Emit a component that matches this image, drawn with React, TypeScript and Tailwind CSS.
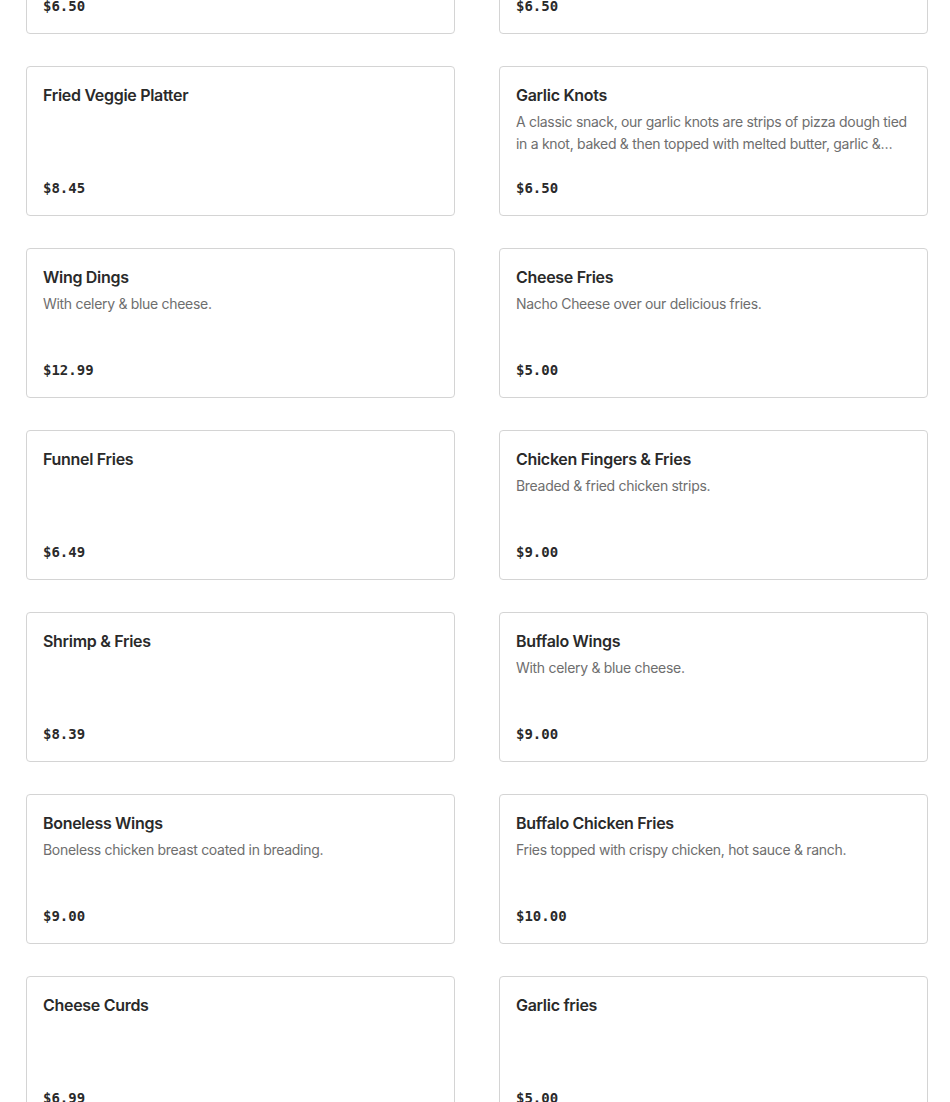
type Item = {
  name: string;
  description?: string;
  price: string;
};

const items: Item[] = [
  { name: "Mozzarella Sticks", price: "$6.50" },
  { name: "Onion Rings", price: "$6.50" },
  { name: "Fried Veggie Platter", price: "$8.45" },
  {
    name: "Garlic Knots",
    description:
      "A classic snack, our garlic knots are strips of pizza dough tied in a knot, baked & then topped with melted butter, garlic & parmesan cheese.",
    price: "$6.50",
  },
  { name: "Wing Dings", description: "With celery & blue cheese.", price: "$12.99" },
  { name: "Cheese Fries", description: "Nacho Cheese over our delicious fries.", price: "$5.00" },
  { name: "Funnel Fries", price: "$6.49" },
  { name: "Chicken Fingers & Fries", description: "Breaded & fried chicken strips.", price: "$9.00" },
  { name: "Shrimp & Fries", price: "$8.39" },
  { name: "Buffalo Wings", description: "With celery & blue cheese.", price: "$9.00" },
  { name: "Boneless Wings", description: "Boneless chicken breast coated in breading.", price: "$9.00" },
  {
    name: "Buffalo Chicken Fries",
    description: "Fries topped with crispy chicken, hot sauce & ranch.",
    price: "$10.00",
  },
  { name: "Cheese Curds", price: "$6.99" },
  { name: "Garlic fries", price: "$5.00" },
];

function MenuCard({ item }: { item: Item }) {
  return (
    <div className="flex h-[150px] flex-col rounded-[4px] border border-[#d4d4d4] bg-white px-4 pt-4 pb-[15px]">
      <h3 className="text-[16px] leading-6 font-semibold tracking-[-0.3px] text-[#2a2a2a]">
        {item.name}
      </h3>
      {item.description && (
        <p className="mt-1 line-clamp-2 text-[14px] leading-[22px] tracking-[-0.3px] text-[#6e6e6e]">
          {item.description}
        </p>
      )}
      <div className="mt-auto font-['DejaVu_Sans_Mono',monospace] text-[14px] leading-6 font-bold text-[#2a2a2a]">
        {item.price}
      </div>
    </div>
  );
}

export default function App() {
  return (
    <div className="h-[1102px] overflow-hidden bg-white font-['Inter','Liberation_Sans',sans-serif]">
      <div className="-mt-[116px] grid grid-cols-2 gap-x-[44px] gap-y-8 pr-[22px] pl-[26px]">
        {items.map((item) => (
          <MenuCard key={item.name} item={item} />
        ))}
      </div>
    </div>
  );
}
